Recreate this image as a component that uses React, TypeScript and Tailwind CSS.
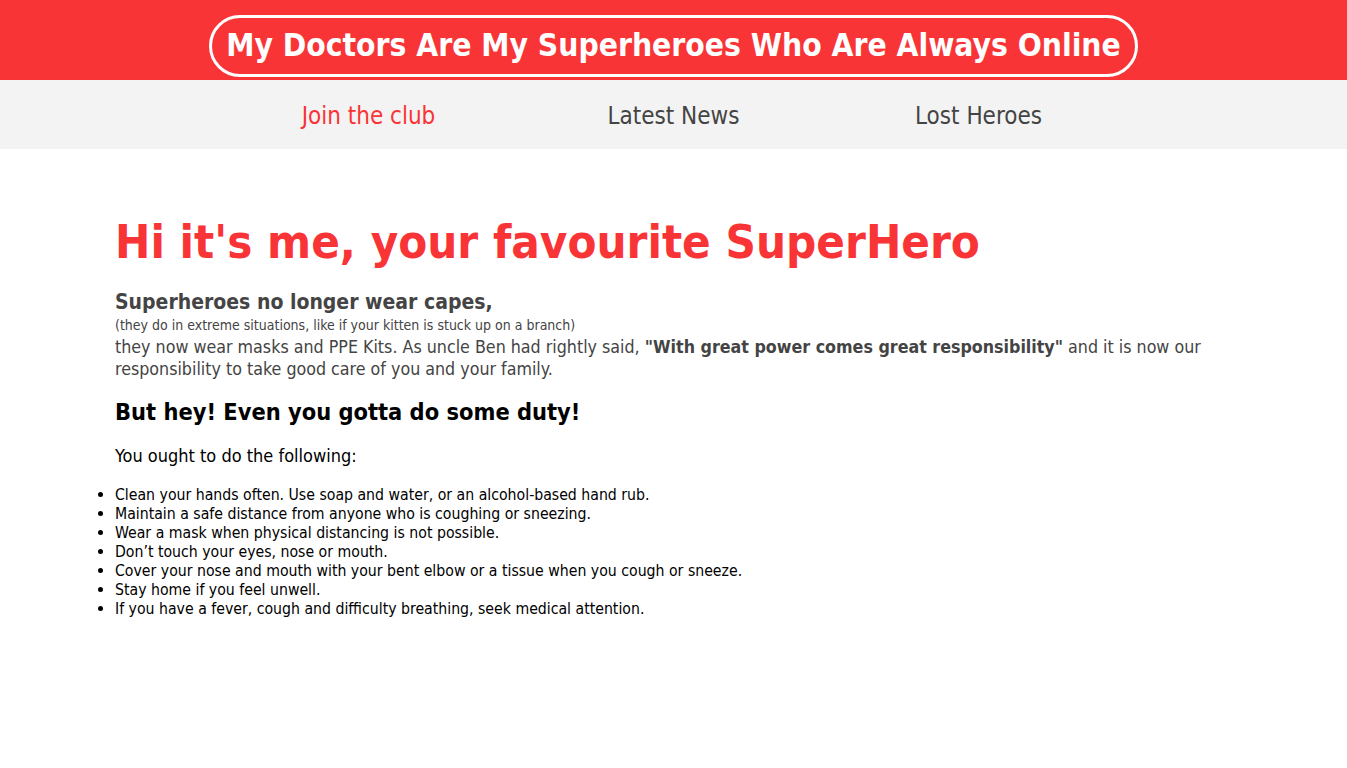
import React from 'react';

const tips = [
  'Clean your hands often. Use soap and water, or an alcohol-based hand rub.',
  'Maintain a safe distance from anyone who is coughing or sneezing.',
  'Wear a mask when physical distancing is not possible.',
  'Don’t touch your eyes, nose or mouth.',
  'Cover your nose and mouth with your bent elbow or a tissue when you cough or sneeze.',
  'Stay home if you feel unwell.',
  'If you have a fever, cough and difficulty breathing, seek medical attention.',
];

const font = "font-['DejaVu_Sans_Condensed','DejaVu_Sans',sans-serif]";

export default function App() {
  return (
    <div className={`${font} min-h-screen bg-white`}>
      <header className="h-[80px] bg-[#f93436] flex items-start justify-center pt-[15px]">
        <h1 className="h-[62px] px-[14px] border-[3px] border-white rounded-full flex items-center text-white font-bold text-[31.5px] leading-none">
          My Doctors Are My Superheroes Who Are Always Online
        </h1>
      </header>

      <nav className="h-[69px] bg-[#f3f3f3] flex items-center justify-center pt-[2px]">
        <a href="#" className="w-[305px] text-center text-[24px] text-[#f93436]">Join the club</a>
        <a href="#" className="w-[305px] text-center text-[24px] text-[#444]">Latest News</a>
        <a href="#" className="w-[305px] text-center text-[24px] text-[#444]">Lost Heroes</a>
      </nav>

      <main className="pl-[115px] pr-[112px] pt-[63px]">
        <h2 className="text-[#f93436] font-bold text-[47px] leading-[60px]">
          Hi it's me, your favourite SuperHero
        </h2>

        <div className="mt-[18px] text-[#444]">
          <p className="font-bold text-[21px] leading-[24px]">Superheroes no longer wear capes,</p>
          <p className="text-[14px] leading-[22px]">(they do in extreme situations, like if your kitten is stuck up on a branch)</p>
          <p className="text-[17.7px] leading-[22px]">
            they now wear masks and PPE Kits. As uncle Ben had rightly said,{' '}
            <b>"With great power comes great responsibility"</b> and it is now our responsibility to take good care of you and your family.
          </p>
        </div>

        <h3 className="mt-[17px] font-bold text-[23.4px] leading-[30px] text-black">
          But hey! Even you gotta do some duty!
        </h3>

        <p className="mt-[18px] text-[18px] leading-[22px] text-black">You ought to do the following:</p>

        <ul className="mt-[18px] list-disc text-[15.7px] leading-[19px] text-black">
          {tips.map((t) => (
            <li key={t}>{t}</li>
          ))}
        </ul>
      </main>
    </div>
  );
}
